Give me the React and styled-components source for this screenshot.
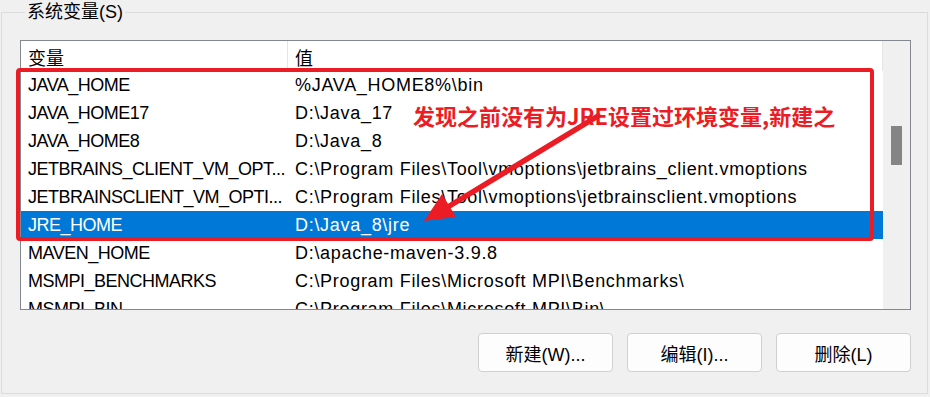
import React from "react";
import styled, { createGlobalStyle } from "styled-components";

const Global = createGlobalStyle`
  html, body { margin: 0; padding: 0; background: #f0f0f0; }
  body { font-family: "Liberation Sans", "Noto Sans CJK SC", sans-serif; }
`;

const Page = styled.div`
  position: relative;
  width: 930px;
  height: 397px;
  overflow: hidden;
  background: #f0f0f0;
  color: #000;
  font-family: "Liberation Sans", "Noto Sans CJK SC", sans-serif;
`;

const Group = styled.fieldset`
  box-sizing: border-box;
  margin: 0 0 0 1px;
  width: 927px;
  height: 394px;
  border: 1px solid #dcdcdc;
  padding: 0 16px 0 18px;
  display: flex;
  flex-direction: column;
`;

const Legend = styled.legend`
  margin-left: 5px;
  padding: 0 2px;
  font-size: 18px;
  line-height: 24px;
  color: #000;
`;

const ListBox = styled.div`
  box-sizing: border-box;
  margin-top: 16px;
  width: 891px;
  height: 270px;
  border: 1px solid #828790;
  background: #fff;
  display: flex;
  overflow: hidden;
`;

const ListMain = styled.div`
  flex: 1;
  display: flex;
  flex-direction: column;
  overflow: hidden;
`;

const Grid = styled.div`
  display: grid;
  grid-template-columns: 267px 1fr;
  height: ${(p) => p.$h}px;
  flex: none;
  background: ${(p) => (p.$selected ? "#0078d7" : "#fff")};
  color: ${(p) => (p.$selected ? "#fff" : "#000")};
  font-size: 18px;
`;

const HeadCell = styled.div`
  padding-left: 7px;
  display: flex;
  align-items: center;
  border-right: 1px solid #e5e5e5;
  padding-top: 2px;
`;

const Cell = styled.div`
  padding-left: 7px;
  display: flex;
  align-items: center;
  white-space: nowrap;
  overflow: hidden;
  letter-spacing: ${(p) => (p.$value ? "0.7px" : "-0.5px")};
`;

const ScrollTrack = styled.div`
  width: 27px;
  flex: none;
  background: #f0f0f0;
  display: flex;
  justify-content: center;
  padding-top: 85px;
  box-sizing: border-box;
`;

const Thumb = styled.div`
  width: 11px;
  height: 39px;
  background: #858585;
`;

const Buttons = styled.div`
  display: flex;
  justify-content: flex-end;
  gap: 14px;
  margin-top: 23px;
  width: 891px;
`;

const Button = styled.button`
  box-sizing: border-box;
  width: 135px;
  height: 39px;
  border: 1px solid #d0d0d0;
  border-radius: 4px;
  background: #fdfdfd;
  font-family: "Liberation Sans", "Noto Sans CJK SC", sans-serif;
  font-size: 18px;
  color: #000;
  padding: 0;
`;

const RedBox = styled.div`
  position: absolute;
  left: 16px;
  top: 68px;
  width: 858px;
  height: 173px;
  box-sizing: border-box;
  border: 4px solid #ec1c24;
  border-radius: 4px;
  pointer-events: none;
`;

const Note = styled.div`
  position: absolute;
  left: 413px;
  top: 100px;
  font-family: "Noto Sans CJK SC", sans-serif;
  font-weight: 700;
  font-size: 22px;
  line-height: 30px;
  color: #ec1c24;
  white-space: nowrap;
  text-shadow: 0 0 1px #fff;
`;

const Overlay = styled.svg`
  position: absolute;
  left: 0;
  top: 0;
  pointer-events: none;
`;

const rows = [
  ["JAVA_HOME", "%JAVA_HOME8%\\bin"],
  ["JAVA_HOME17", "D:\\Java_17"],
  ["JAVA_HOME8", "D:\\Java_8"],
  ["JETBRAINS_CLIENT_VM_OPT...", "C:\\Program Files\\Tool\\vmoptions\\jetbrains_client.vmoptions"],
  ["JETBRAINSCLIENT_VM_OPTI...", "C:\\Program Files\\Tool\\vmoptions\\jetbrainsclient.vmoptions"],
  ["JRE_HOME", "D:\\Java_8\\jre", true],
  ["MAVEN_HOME", "D:\\apache-maven-3.9.8"],
  ["MSMPI_BENCHMARKS", "C:\\Program Files\\Microsoft MPI\\Benchmarks\\"],
  ["MSMPI_BIN", "C:\\Program Files\\Microsoft MPI\\Bin\\"],
];

export default function App() {
  return (
    <Page>
      <Global />
      <Group>
        <Legend>系统变量(S)</Legend>
        <ListBox>
          <ListMain>
            <Grid $h={30}>
              <HeadCell>变量</HeadCell>
              <HeadCell>值</HeadCell>
            </Grid>
            {rows.map(([k, v, sel]) => (
              <Grid key={k} $h={28} $selected={sel}>
                <Cell>{k}</Cell>
                <Cell $value>{v}</Cell>
              </Grid>
            ))}
          </ListMain>
          <ScrollTrack>
            <Thumb />
          </ScrollTrack>
        </ListBox>
        <Buttons>
          <Button>新建(W)...</Button>
          <Button>编辑(I)...</Button>
          <Button>删除(L)</Button>
        </Buttons>
      </Group>
      <RedBox />
      <Note>发现之前没有为JRE设置过环境变量,新建之</Note>
      <Overlay width="930" height="397" viewBox="0 0 930 397">
        <line x1="598" y1="116" x2="447" y2="207.5" stroke="#ec1c24" strokeWidth="5.5" strokeLinecap="round" />
        <polygon points="424,221 456,217 442,194" fill="#ec1c24" />
      </Overlay>
    </Page>
  );
}
